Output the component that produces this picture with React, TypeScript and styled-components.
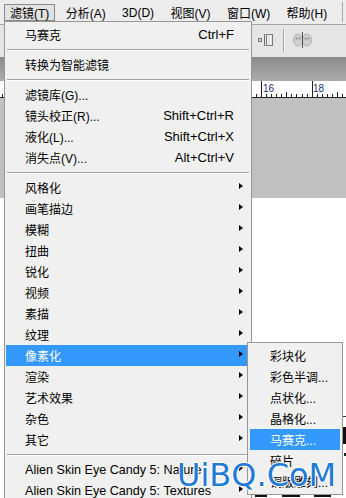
import React from "react";
import styled, { createGlobalStyle } from "styled-components";

const Global = createGlobalStyle`
  html, body { margin: 0; padding: 0; background: #fff; }
  body { overflow: hidden; }
`;

const Page = styled.div`
  position: relative;
  width: 346px;
  height: 498px;
  overflow: hidden;
  background: #fff;
  font-family: "Liberation Sans", "Noto Sans CJK SC", sans-serif;
  font-size: 12px;
  color: #000;
`;

const MenuBar = styled.div`
  height: 25px;
  box-sizing: border-box;
  display: flex;
  align-items: flex-start;
  gap: 4.4px;
  padding: 4px 0 0 4px;
  background: #ececec;
  border-bottom: 1px solid #a3a3a3;
`;

const MenuBarItem = styled.div<{ $open?: boolean }>`
  height: 17px;
  box-sizing: border-box;
  display: flex;
  align-items: center;
  padding: 0 5px;
  white-space: nowrap;
  border: 1px solid ${(p) => (p.$open ? "#8a8a8a" : "transparent")};
  background: ${(p) => (p.$open ? "#e2e2e2" : "transparent")};
`;

const BarDivider = styled.div`
  width: 1px;
  height: 20px;
  margin: -2px 3px 0 auto;
  background: #a8a8a8;
`;

const Toolbar = styled.div`
  height: 32px;
  display: flex;
  align-items: center;
  justify-content: flex-end;
  padding-right: 34px;
  background: #e5e5e5;
`;

const DarkBar = styled.div`
  height: 24px;
  background: linear-gradient(#8b8b8b, #ababab);
`;

const Ruler = styled.div`
  height: 17px;
  background: #fff;
  border-bottom: 1px solid #222;
  box-sizing: border-box;
`;

const GrayCanvas = styled.div`
  height: 100px;
  background: #c0c0c0;
`;

const Doc = styled.div`
  height: 299px;
  background: #fff;
`;

const Dropdown = styled.div`
  position: absolute;
  left: 4px;
  top: 21px;
  width: 248px;
  box-sizing: border-box;
  border: 1px solid #979797;
  background: #f0f0f0;
  padding: 2px 1px;
`;

const Row = styled.div<{ $active?: boolean; $arrow?: boolean }>`
  position: relative;
  height: 21px;
  display: flex;
  align-items: center;
  padding: 0 ${(p) => (p.$arrow ? "7px" : "16px")} 0 19px;
  white-space: nowrap;
  background: ${(p) => (p.$active ? "#3399ff" : "transparent")};
  color: ${(p) => (p.$active ? "#fff" : "#000")};
`;

const Label = styled.span<{ $latin?: boolean }>`
  font-size: ${(p) => (p.$latin ? "12.6px" : "12px")};
`;

const Shortcut = styled.span`
  margin-left: auto;
  font-size: 13px;
`;

const Arrow = styled.span`
  margin-left: auto;
  width: 0;
  height: 0;
  border-top: 3.5px solid transparent;
  border-bottom: 3.5px solid transparent;
  border-left: 4px solid #000;
  margin-top: -4px;
`;

const Sep = styled.div`
  height: 9px;
  display: flex;
  align-items: center;
  &::after {
    content: "";
    flex: 1;
    margin: 0 1px;
    height: 1px;
    background: #a0a0a0;
    border-bottom: 1px solid #fff;
  }
`;

const SubMenu = styled.div`
  position: absolute;
  left: 241px;
  top: -3px;
  width: 96px;
  box-sizing: border-box;
  border: 1px solid #979797;
  background: #f0f0f0;
  padding: 2px 2px;
  color: #000;
`;

const SubRow = styled.div<{ $active?: boolean }>`
  height: 21px;
  display: flex;
  align-items: center;
  padding-left: 20px;
  white-space: nowrap;
  background: ${(p) => (p.$active ? "#3399ff" : "transparent")};
  color: ${(p) => (p.$active ? "#fff" : "#000")};
`;

const Watermark = styled.div`
  position: absolute;
  left: 177px;
  top: 459px;
  font-family: "DejaVu Sans", Verdana, sans-serif;
  font-size: 32px;
  line-height: 32px;
  color: #1f7bd6;
  white-space: nowrap;
  text-shadow: 1px 0 #fff, -1px 0 #fff, 0 1px #fff, 0 -1px #fff;
`;

type MenuEntry =
  | { sep: true }
  | { label: string; shortcut?: string; arrow?: boolean; active?: boolean; latin?: boolean };

const entries: MenuEntry[] = [
  { label: "马赛克", shortcut: "Ctrl+F" },
  { sep: true },
  { label: "转换为智能滤镜" },
  { sep: true },
  { label: "滤镜库(G)..." },
  { label: "镜头校正(R)...", shortcut: "Shift+Ctrl+R" },
  { label: "液化(L)...", shortcut: "Shift+Ctrl+X" },
  { label: "消失点(V)...", shortcut: "Alt+Ctrl+V" },
  { sep: true },
  { label: "风格化", arrow: true },
  { label: "画笔描边", arrow: true },
  { label: "模糊", arrow: true },
  { label: "扭曲", arrow: true },
  { label: "锐化", arrow: true },
  { label: "视频", arrow: true },
  { label: "素描", arrow: true },
  { label: "纹理", arrow: true },
  { label: "像素化", arrow: true, active: true },
  { label: "渲染", arrow: true },
  { label: "艺术效果", arrow: true },
  { label: "杂色", arrow: true },
  { label: "其它", arrow: true },
  { sep: true },
  { label: "Alien Skin Eye Candy 5: Nature", arrow: true, latin: true },
  { label: "Alien Skin Eye Candy 5: Textures", arrow: true, latin: true },
];

const subEntries = ["彩块化", "彩色半调...", "点状化...", "晶格化...", "马赛克...", "碎片", "铜版雕刻..."];

const ToolIcons = () => (
  <svg width="54" height="24" viewBox="0 0 54 24">
    <rect x="0.5" y="9.5" width="3" height="3" fill="#d0d0d0" stroke="#7a7a7a" />
    <line x1="6.5" y1="5" x2="6.5" y2="17" stroke="#6a6a6a" />
    <rect x="8.5" y="5.5" width="6" height="11" fill="#e8e8e8" stroke="#7a7a7a" />
    <line x1="25.5" y1="0" x2="25.5" y2="23" stroke="#a6a6a6" />
    <line x1="26.5" y1="0" x2="26.5" y2="23" stroke="#f6f6f6" />
    <ellipse cx="40" cy="11" rx="4.5" ry="6" fill="#cfcfcf" stroke="#b0b0b0" />
    <ellipse cx="49" cy="11" rx="4.5" ry="6" fill="#cfcfcf" stroke="#b0b0b0" />
    <circle cx="38.5" cy="9.5" r="1" fill="#8a8a8a" />
    <circle cx="41.5" cy="9.5" r="1" fill="#8a8a8a" />
    <circle cx="47.5" cy="9.5" r="1" fill="#8a8a8a" />
    <circle cx="50.5" cy="9.5" r="1" fill="#8a8a8a" />
    <line x1="44.5" y1="3" x2="44.5" y2="19" stroke="#555" />
  </svg>
);

const RulerDrawing = () => {
  const ticks: React.ReactNode[] = [];
  const unit = 50.7 / 10;
  const origin = 261 - 50.7 * 6;
  for (let i = 0; i < 90; i++) {
    const x = Math.round(origin + i * unit) + 0.5;
    if (x < 0 || x > 346) continue;
    const h = i % 10 === 0 ? 16 : i % 5 === 0 ? 5 : 3;
    ticks.push(<line key={i} x1={x} y1={16 - h} x2={x} y2={16} stroke="#222" />);
  }
  return (
    <svg width="346" height="16" viewBox="0 0 346 16" style={{ display: "block" }}>
      {ticks}
      <text x="263" y="11" fontSize="10" fill="#1d2f6b" fontFamily="Liberation Sans, sans-serif">16</text>
      <text x="313" y="11" fontSize="10" fill="#1d2f6b" fontFamily="Liberation Sans, sans-serif">18</text>
    </svg>
  );
};

const DocDrawing = () => (
  <svg width="346" height="299" viewBox="0 0 346 299" style={{ display: "block" }}>
    <rect x="343" y="218" width="3" height="1" fill="#333" />
    <rect x="343" y="229" width="3" height="17" fill="#111" />
    <rect x="344" y="255" width="2" height="3" fill="#222" />
    <rect x="255" y="295" width="12" height="4" fill="#111" />
    <rect x="282" y="295" width="18" height="4" fill="#111" />
    <rect x="314" y="295" width="17" height="4" fill="#111" />
  </svg>
);

export default function App() {
  return (
    <Page>
      <Global />
      <MenuBar>
        <MenuBarItem $open>滤镜(T)</MenuBarItem>
        <MenuBarItem>分析(A)</MenuBarItem>
        <MenuBarItem>3D(D)</MenuBarItem>
        <MenuBarItem>视图(V)</MenuBarItem>
        <MenuBarItem>窗口(W)</MenuBarItem>
        <MenuBarItem>帮助(H)</MenuBarItem>
        <BarDivider />
      </MenuBar>
      <Toolbar>
        <ToolIcons />
      </Toolbar>
      <DarkBar />
      <Ruler>
        <RulerDrawing />
      </Ruler>
      <GrayCanvas />
      <Doc>
        <DocDrawing />
      </Doc>

      <Dropdown>
        {entries.map((e, i) =>
          "sep" in e ? (
            <Sep key={i} />
          ) : (
            <Row key={i} $active={e.active} $arrow={e.arrow}>
              <Label $latin={e.latin}>{e.label}</Label>
              {e.shortcut && <Shortcut>{e.shortcut}</Shortcut>}
              {e.arrow && <Arrow />}
              {e.active && (
                <SubMenu>
                  {subEntries.map((s) => (
                    <SubRow key={s} $active={s === "马赛克..."}>
                      {s}
                    </SubRow>
                  ))}
                </SubMenu>
              )}
            </Row>
          )
        )}
      </Dropdown>

      <Watermark>UiBQ.CoM</Watermark>
    </Page>
  );
}
